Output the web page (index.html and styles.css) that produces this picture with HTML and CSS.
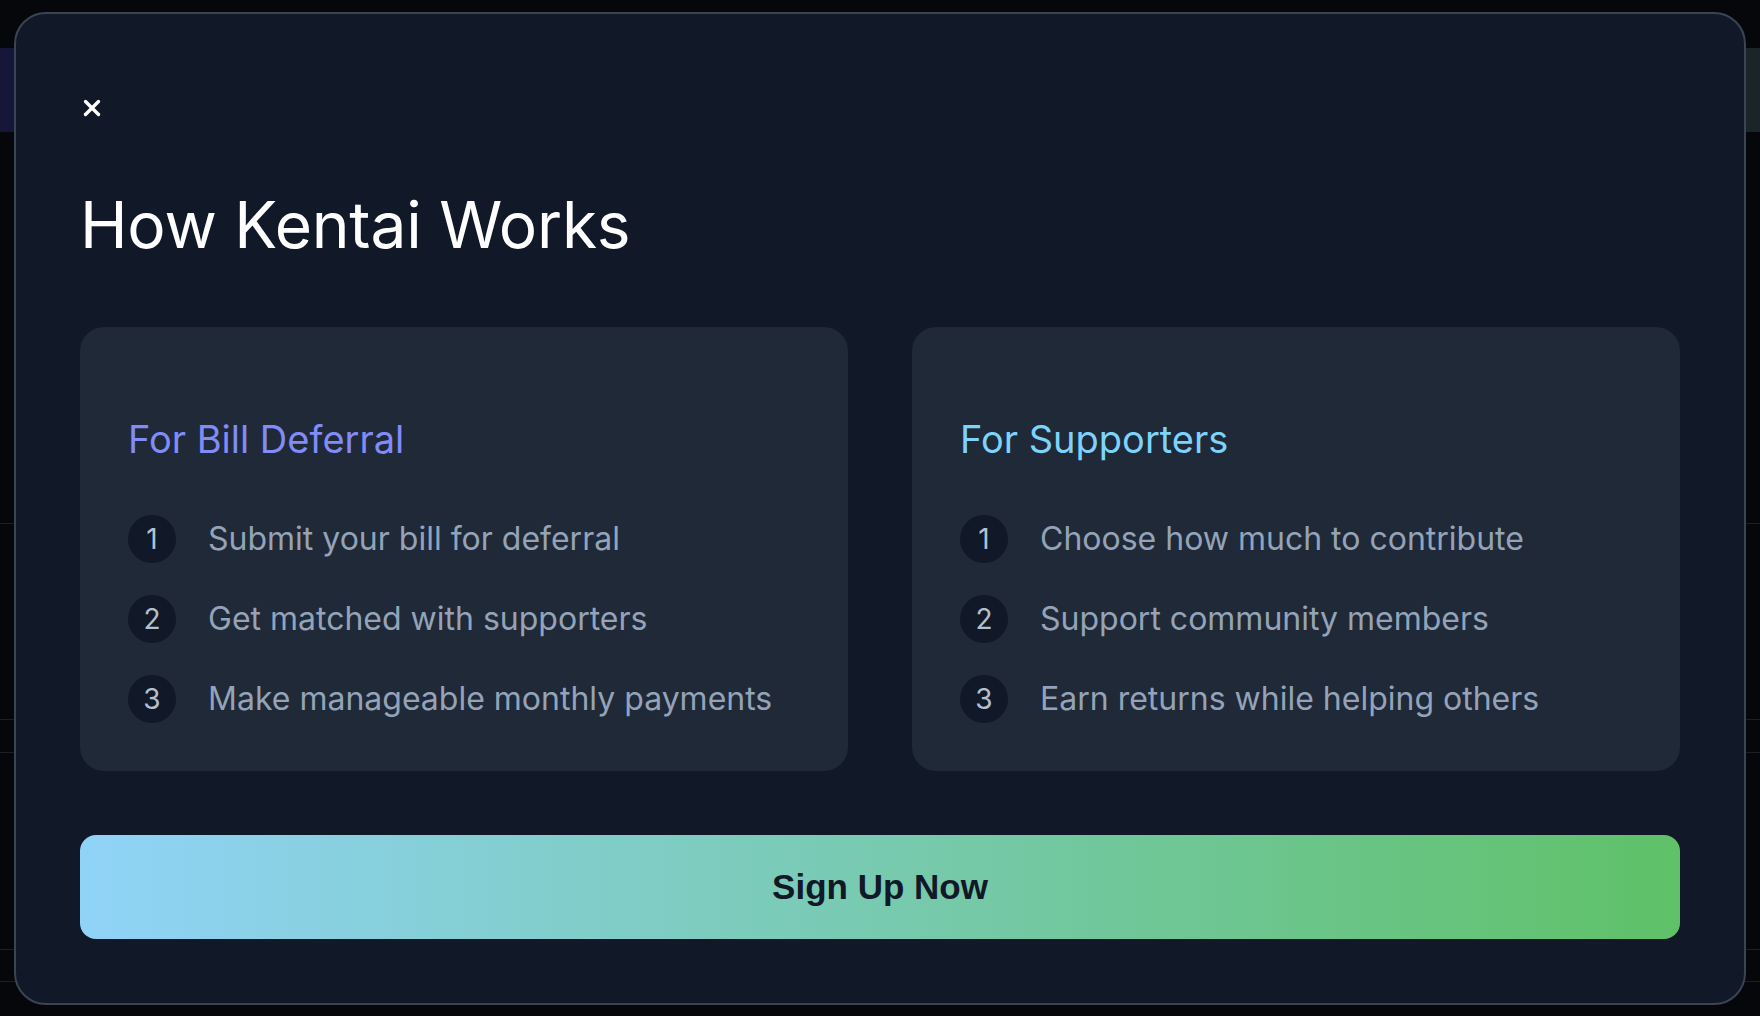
FILE: index.html
```html
<!DOCTYPE html>
<html lang="en">
<head>
<meta charset="utf-8">
<title>How Kentai Works</title>
<link rel="stylesheet" href="styles.css">
</head>
<body>
<div class="page">
  <div class="page-top"></div>
  <div class="page-band"></div>
  <div class="page-row r1"></div>
  <div class="page-row r2"></div>
  <div class="page-row r3"></div>
  <div class="page-row r4"></div>
  <div class="page-row r5"></div>
</div>
<div class="overlay">
  <div class="modal" role="dialog" aria-labelledby="modal-title">
    <button class="close" aria-label="Close">
      <svg width="18" height="18" viewBox="0 0 18 18" aria-hidden="true">
        <line x1="2.5" y1="2.5" x2="15.5" y2="15.5" />
        <line x1="15.5" y1="2.5" x2="2.5" y2="15.5" />
      </svg>
    </button>
    <h2 class="title" id="modal-title">How Kentai Works</h2>
    <div class="cards">
      <section class="card">
        <h3 class="card-title deferral">For Bill Deferral</h3>
        <ol class="steps">
          <li class="step"><span class="num">1</span><span class="step-text">Submit your bill for deferral</span></li>
          <li class="step"><span class="num">2</span><span class="step-text">Get matched with supporters</span></li>
          <li class="step"><span class="num">3</span><span class="step-text">Make manageable monthly payments</span></li>
        </ol>
      </section>
      <section class="card">
        <h3 class="card-title supporters">For Supporters</h3>
        <ol class="steps">
          <li class="step"><span class="num">1</span><span class="step-text">Choose how much to contribute</span></li>
          <li class="step"><span class="num">2</span><span class="step-text">Support community members</span></li>
          <li class="step"><span class="num">3</span><span class="step-text">Earn returns while helping others</span></li>
        </ol>
      </section>
    </div>
    <button class="cta">Sign Up Now</button>
  </div>
</div>
</body>
</html>
```

FILE: styles.css
```css
* {
  box-sizing: border-box;
}

html, body {
  margin: 0;
  padding: 0;
  height: 100%;
}

body {
  background: #06070b;
  font-family: Inter, "Noto Sans", "Liberation Sans", sans-serif;
  overflow: hidden;
}

/* dimmed page behind the modal */
.page {
  display: flex;
  flex-direction: column;
}

.page-top {
  height: 48px;
}

.page-band {
  height: 84px;
  background: linear-gradient(to right, #15163a 0, #15163a 40px, #0b0d14 40px, #0b0d14 calc(100% - 220px), #1b2429 calc(100% - 220px));
}

.page-row {
  border-bottom: 1px solid #1a2026;
}

.r1 { height: 392px; }
.r2 { height: 196px; }
.r3 { height: 33px; }
.r4 { height: 197px; }
.r5 { height: 32px; }

.overlay {
  position: fixed;
  inset: 0;
  display: flex;
  align-items: center;
  justify-content: center;
}

.modal {
  width: 1732px;
  padding: 64px;
  background: #111827;
  border: 2px solid #3a4454;
  border-radius: 32px;
  display: flex;
  flex-direction: column;
}

.close {
  align-self: flex-start;
  background: none;
  border: none;
  padding: 0;
  margin: 21px 0 0 3px;
  cursor: pointer;
  line-height: 0;
}

.close svg {
  display: block;
  stroke: #ffffff;
  stroke-width: 3.4;
  stroke-linecap: round;
}

.title {
  margin: 68px 0 62px;
  font-size: 64px;
  line-height: 80px;
  font-weight: 400;
  letter-spacing: -0.2px;
  color: #ffffff;
}

.cards {
  display: grid;
  grid-template-columns: 1fr 1fr;
  gap: 64px;
}

.card {
  background: #1f2937;
  border-radius: 24px;
  padding: 48px;
}

.card-title {
  margin: 36px 0 48px;
  font-size: 38px;
  line-height: 56px;
  font-weight: 400;
}

.deferral {
  color: #818cf8;
}

.supporters {
  color: #7dd3fc;
}

.steps {
  list-style: none;
  margin: 0;
  padding: 0;
  display: flex;
  flex-direction: column;
  gap: 32px;
}

.step {
  display: flex;
  align-items: center;
  gap: 32px;
}

.num {
  flex: none;
  width: 48px;
  height: 48px;
  border-radius: 50%;
  background: #111827;
  color: #b4c0d0;
  font-size: 28px;
  display: flex;
  align-items: center;
  justify-content: center;
}

.step-text {
  font-size: 32px;
  line-height: 48px;
  color: #94a3b8;
}

.cta {
  margin-top: 64px;
  width: 100%;
  height: 104px;
  border: none;
  border-radius: 16px;
  background: linear-gradient(to right, #90d3f7, #5fc168);
  color: #111827;
  font-family: "Liberation Sans", Arial, sans-serif;
  font-weight: 700;
  font-size: 35px;
  line-height: 56px;
  cursor: pointer;
}
```
